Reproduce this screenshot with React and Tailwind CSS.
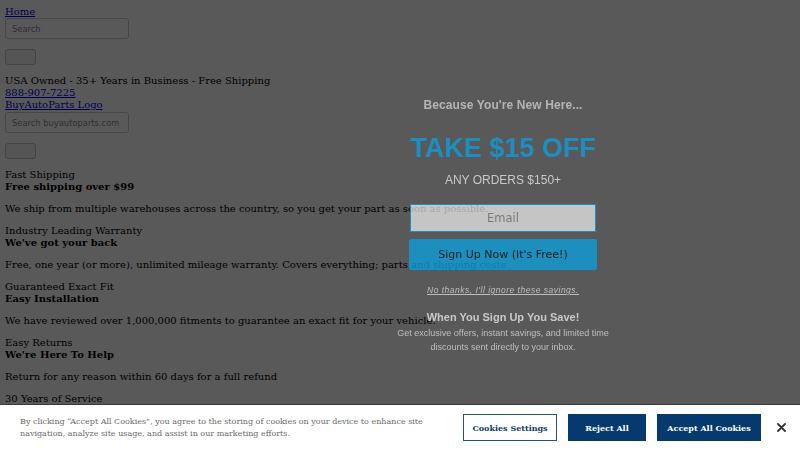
export default function App() {
  const features = [
    {
      title: 'Fast Shipping',
      head: 'Free shipping over $99',
      text: 'We ship from multiple warehouses across the country, so you get your part as soon as possible.',
    },
    {
      title: 'Industry Leading Warranty',
      head: "We've got your back",
      text: 'Free, one year (or more), unlimited mileage warranty. Covers everything; parts and shipping costs',
    },
    {
      title: 'Guaranteed Exact Fit',
      head: 'Easy Installation',
      text: 'We have reviewed over 1,000,000 fitments to guarantee an exact fit for your vehicle.',
    },
    {
      title: 'Easy Returns',
      head: "We're Here To Help",
      text: 'Return for any reason within 60 days for a full refund',
    },
  ]

  return (
    <div className="relative h-[450px] overflow-hidden bg-white px-[5px] pt-[6px] font-['DejaVu_Serif',serif] text-[10px] leading-[12px] text-black">
      {/* Underlying unstyled page */}
      <a href="#" className="text-[#0000ee] underline">Home</a>
      <input
        placeholder="Search"
        className="block h-[21px] w-[124px] rounded-[3px] border border-[#c8c8c8] px-[6px] font-['DejaVu_Sans',sans-serif] text-[8.33px] placeholder:text-[#8a8a8a]"
      />
      <button className="mt-[10px] block h-[16px] w-[31px] rounded-[3px] border border-[#c0c0c0] bg-[#f2f2f2]" />

      <div className="mt-[10px]">USA Owned - 35+ Years in Business - Free Shipping</div>
      <a href="#" className="block w-fit text-[#0000ee] underline">888-907-7225</a>
      <a href="#" className="block w-fit text-[#0000ee] underline">BuyAutoParts Logo</a>
      <input
        placeholder="Search buyautoparts.com"
        className="mt-[1px] block h-[21px] w-[124px] rounded-[3px] border border-[#c8c8c8] px-[6px] font-['DejaVu_Sans',sans-serif] text-[8.33px] placeholder:text-[#8a8a8a]"
      />
      <button className="mt-[10px] block h-[16px] w-[31px] rounded-[3px] border border-[#c0c0c0] bg-[#f2f2f2]" />

      <div className="mt-[10px]">
        {features.map((f) => (
          <div key={f.title}>
            <div>{f.title}</div>
            <div className="font-bold">{f.head}</div>
            <p className="my-[10px]">{f.text}</p>
          </div>
        ))}
        <div>30 Years of Service</div>
      </div>

      {/* Dim overlay */}
      <div className="fixed inset-0 bg-black/65" />

      {/* Signup popup */}
      <div className="fixed left-[383px] top-[98px] flex w-[240px] flex-col items-center font-['Liberation_Sans',Arial,sans-serif]">
        <div className="text-[12px] font-bold leading-[14px] tracking-[0.1px] text-[#b4b4b4]">
          Because You're New Here...
        </div>
        <div className="mt-[21px] text-[27px] font-bold leading-[30px] text-[#1b8fc2]">TAKE $15 OFF</div>
        <div className="mt-[10px] text-[12px] leading-[14px] text-[#c8c8c8]">ANY ORDERS $150+</div>
        <input
          placeholder="Email"
          className="mt-[17px] h-[28px] w-[186px] border border-[#1b8fc2] bg-white/65 text-center font-['DejaVu_Sans',sans-serif] text-[11.5px] placeholder:text-[#7a7a7a]"
        />
        <button className="mt-[7px] h-[31px] w-[188px] rounded-[2px] bg-[#0c9cd8]/80 font-['DejaVu_Sans',sans-serif] text-[11px] text-[#1e1e1e]">
          Sign Up Now (It's Free!)
        </button>
        <a href="#" className="mt-[14px] text-[8.5px] italic leading-[12px] tracking-[0.5px] text-[#bdbdbd] underline">
          No thanks, I'll ignore these savings.
        </a>
        <div className="mt-[14px] text-[11px] font-bold leading-[14px] text-[#c8c8c8]">When You Sign Up You Save!</div>
        <div className="mt-[2px] text-center text-[9px] leading-[14px] text-[#bdbdbd]">
          Get exclusive offers, instant savings, and limited time
          <br />
          discounts sent directly to your inbox.
        </div>
      </div>

      {/* Cookie banner */}
      <div className="fixed bottom-0 left-0 right-0 flex h-[46px] items-center border-t border-[#3a3a3a] bg-white pl-[20px] font-['DejaVu_Serif',serif]">
        <p className="w-[430px] text-[8px] leading-[12px] text-[#696969]">
          By clicking “Accept All Cookies”, you agree to the storing of cookies on your device to enhance site
          navigation, analyze site usage, and assist in our marketing efforts.
        </p>
        <button className="ml-[13px] h-[27px] w-[94px] border border-[#1f5289] bg-white text-[8px] font-bold text-[#0b3a6c]">
          Cookies Settings
        </button>
        <button className="ml-[11px] h-[27px] w-[78px] bg-[#063a6e] text-[8px] font-bold text-white">
          Reject All
        </button>
        <button className="ml-[11px] h-[27px] w-[104px] bg-[#063a6e] text-[8px] font-bold text-white">
          Accept All Cookies
        </button>
        <button className="ml-[14px] flex h-[12px] w-[12px] items-center justify-center text-[#333]">
          <svg width="9" height="9" viewBox="0 0 9 9" fill="none" stroke="currentColor" strokeWidth="1.8" strokeLinecap="round">
            <path d="M1 1L8 8M8 1L1 8" />
          </svg>
        </button>
      </div>
    </div>
  )
}
